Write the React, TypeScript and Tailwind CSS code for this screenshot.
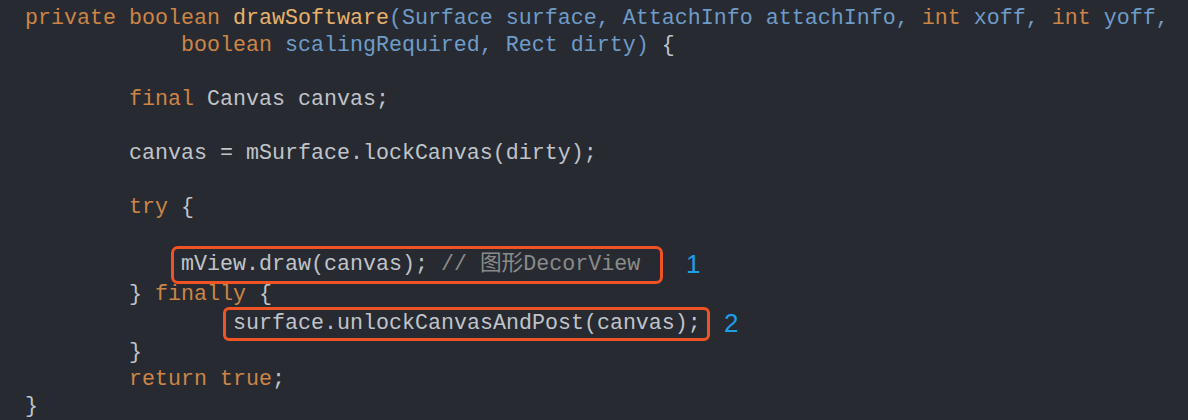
const K = "text-[#cc8547]";
const F = "text-[#e8b26c]";
const P = "text-[#6e9cc9]";
const T = "text-[#c0c4ca]";
const C = "text-[#8b8b8b]";

type Seg = [string, string];

function Line({ segs, h = "h-[27px]" }: { segs: Seg[]; h?: string }) {
  return (
    <div className={`flex items-center whitespace-pre ${h}`}>
      {segs.map(([cls, txt], i) => (
        <span key={i} className={cls}>
          {txt}
        </span>
      ))}
    </div>
  );
}

export default function App() {
  return (
    <div className="w-[1188px] h-[420px] overflow-hidden bg-[#272a30] pl-[25px] pt-[5px] font-['Liberation_Mono','Noto_Sans_CJK_SC',monospace] text-[21.67px] leading-[27px]">
      <Line
        segs={[
          [K, "private boolean "],
          [F, "drawSoftware"],
          [P, "(Surface surface, AttachInfo attachInfo, "],
          [K, "int "],
          [P, "xoff, "],
          [K, "int "],
          [P, "yoff,"],
        ]}
      />
      <Line
        segs={[
          [K, "            boolean "],
          [P, "scalingRequired, Rect dirty) "],
          [T, "{"],
        ]}
      />
      <Line segs={[]} />
      <Line
        segs={[
          [K, "        final "],
          [T, "Canvas canvas;"],
        ]}
      />
      <Line segs={[]} />
      <Line segs={[[T, "        canvas = mSurface.lockCanvas(dirty);"]]} />
      <Line segs={[]} />
      <Line
        segs={[
          [K, "        try "],
          [T, "{"],
        ]}
      />
      <Line segs={[]} />
      <div className="flex h-[33px] items-center">
        <div className="ml-[146px] flex h-[38px] w-[492px] shrink-0 items-center whitespace-pre rounded-[7px] border-[3px] border-[#f05324] pl-[7px]">
          <span className={T}>mView.draw(canvas); </span>
          <span className={C}>// 图形DecorView</span>
        </div>
        <span className="ml-[23px] font-['Liberation_Sans',sans-serif] text-[26px] text-[#1c9fe8]">1</span>
      </div>
      <Line
        segs={[
          [T, "        } "],
          [K, "finally "],
          [T, "{"],
        ]}
      />
      <div className="flex h-[31px] items-center">
        <div className="ml-[198px] flex h-[34px] w-[487px] shrink-0 items-center whitespace-pre rounded-[6px] border-[3px] border-[#f05324] pl-[7px]">
          <span className={T}>surface.unlockCanvasAndPost(canvas);</span>
        </div>
        <span className="ml-[14px] font-['Liberation_Sans',sans-serif] text-[26px] text-[#1c9fe8]">2</span>
      </div>
      <Line segs={[[T, "        }"]]} />
      <Line
        segs={[
          [K, "        return true"],
          [T, ";"],
        ]}
      />
      <Line segs={[[T, "}"]]} />
    </div>
  );
}
